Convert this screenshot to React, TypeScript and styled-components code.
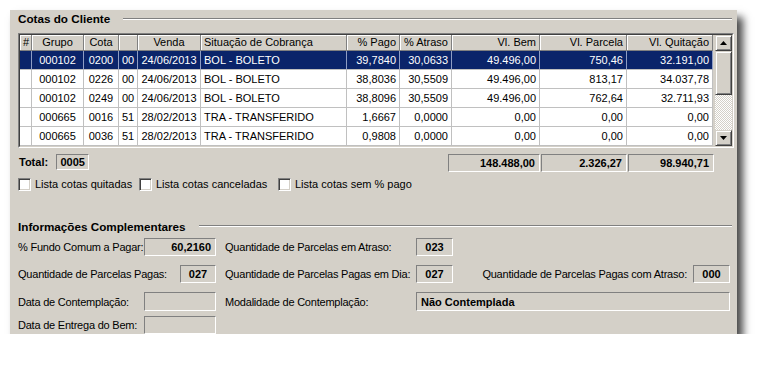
import styled, { createGlobalStyle } from "styled-components"

const GlobalStyle = createGlobalStyle`
  html, body {
    margin: 0;
    padding: 0;
    background: #fff;
  }
  body {
    font-family: "Liberation Sans", Arial, sans-serif;
    font-size: 11px;
    color: #000;
  }
`

const Page = styled.div`
  padding: 10px 0 0 10px;
`

const Panel = styled.div`
  width: 727px;
  height: 324px;
  box-sizing: border-box;
  padding: 0 5px 0 8px;
  background: #d4d0c8;
  box-shadow: 6px 7px 8px rgba(0, 0, 0, 0.72);
  overflow: hidden;
  display: flex;
  flex-direction: column;
`

const SectionHeader = styled.div<{ $top?: number }>`
  display: flex;
  align-items: center;
  gap: 13px;
  height: 20px;
  margin-top: ${(p) => p.$top ?? 0}px;
`

const SectionTitle = styled.span`
  font-weight: bold;
  font-size: 11.7px;
  white-space: nowrap;
`

const GrooveLine = styled.div`
  flex: 1;
  height: 0;
  border-top: 1px solid #808080;
  border-bottom: 1px solid #fff;
`

const GridOuter = styled.div`
  margin-top: 5px;
  width: 716px;
  box-sizing: border-box;
  border: 1px solid;
  border-color: #808080 #fff #fff #808080;
`

const GridInner = styled.div`
  display: flex;
  border: 1px solid;
  border-color: #404040 #d4d0c8 #d4d0c8 #404040;
`

const Table = styled.div`
  width: 695px;
  display: flex;
  flex-direction: column;
`

const Row = styled.div<{ $cols: string }>`
  display: grid;
  grid-template-columns: ${(p) => p.$cols};
`

const HeaderCell = styled.div<{ $align: string }>`
  height: 16px;
  box-sizing: border-box;
  padding: 0 3px;
  display: flex;
  align-items: center;
  justify-content: ${(p) => p.$align};
  background: #d4d0c8;
  border-right: 1px solid #808080;
  border-bottom: 1px solid #808080;
  box-shadow: inset 1px 1px 0 #fff;
  white-space: nowrap;
  overflow: hidden;
`

const DataCell = styled.div<{ $align: string; $selected: boolean }>`
  height: 19px;
  box-sizing: border-box;
  padding: 0 3px;
  display: flex;
  align-items: center;
  justify-content: ${(p) => p.$align};
  background: ${(p) => (p.$selected ? "#0a246a" : "#fff")};
  color: ${(p) => (p.$selected ? "#fff" : "#000")};
  border-right: 1px solid ${(p) => (p.$selected ? "#8e9dc4" : "#c0c0c0")};
  border-bottom: 1px solid #c0c0c0;
  white-space: nowrap;
  overflow: hidden;
`

const ScrollBar = styled.div`
  width: 17px;
  display: flex;
  flex-direction: column;
`

const ScrollButton = styled.div<{ $height: number }>`
  height: ${(p) => p.$height}px;
  box-sizing: border-box;
  background: #d4d0c8;
  border: 1px solid;
  border-color: #d4d0c8 #404040 #404040 #d4d0c8;
  box-shadow: inset 1px 1px 0 #fff, inset -1px -1px 0 #808080;
  display: flex;
  align-items: center;
  justify-content: center;
`

const ScrollTrack = styled.div`
  flex: 1;
  background: repeating-conic-gradient(#fff 0 25%, #d4d0c8 0 50%) 0 0 / 2px 2px;
`

const TotalsRow = styled.div`
  display: flex;
  align-items: flex-start;
  margin-top: 6px;
  height: 18px;
`

const TotalLabel = styled.span`
  font-weight: bold;
  margin: 2px 8px 0 1px;
`

const ValueBox = styled.div<{ $width?: number; $height?: number; $align?: string }>`
  ${(p) => (p.$width ? `width: ${p.$width}px;` : "flex: 1;")}
  height: ${(p) => p.$height ?? 18}px;
  box-sizing: border-box;
  border: 1px solid;
  border-color: #808080 #fff #fff #808080;
  display: flex;
  align-items: center;
  justify-content: ${(p) => p.$align ?? "flex-end"};
  padding: 0 4px;
  font-weight: bold;
  white-space: nowrap;
  flex-shrink: 0;
`

const TotalsGroup = styled.div`
  display: flex;
  gap: 1px;
  margin-left: auto;
  margin-right: 18px;
`

const CheckRow = styled.div`
  display: flex;
  margin-top: 6px;
  height: 13px;
`

const CheckItem = styled.label<{ $width: number }>`
  width: ${(p) => p.$width}px;
  display: flex;
  align-items: center;
  gap: 4px;
  white-space: nowrap;
`

const CheckBox = styled.span`
  width: 13px;
  height: 13px;
  box-sizing: border-box;
  background: #fff;
  border: 1px solid;
  border-color: #808080 #fff #fff #808080;
  box-shadow: inset 1px 1px 0 #404040, inset -1px -1px 0 #d4d0c8;
`

const InfoGrid = styled.div`
  display: grid;
  grid-template-columns: 198px 228px 268px;
  column-gap: 9px;
  margin-top: 2px;
`

const InfoCell = styled.div<{ $top: number; $justify?: string; $span?: number; $height?: number; $gap?: number }>`
  display: flex;
  align-items: center;
  justify-content: ${(p) => p.$justify ?? "space-between"};
  gap: ${(p) => p.$gap ?? 0}px;
  margin-top: ${(p) => p.$top}px;
  height: ${(p) => p.$height ?? 18}px;
  ${(p) => (p.$span ? `grid-column: span ${p.$span};` : "")}
  white-space: nowrap;
`

const InfoLabel = styled.span<{ $width?: number }>`
  letter-spacing: -0.22px;
  ${(p) => (p.$width ? `width: ${p.$width}px; flex-shrink: 0;` : "")}
`

const columns = [
  { title: "#", w: 12, align: "flex-start" },
  { title: "Grupo", w: 52, align: "center" },
  { title: "Cota", w: 35, align: "center" },
  { title: "", w: 19, align: "center" },
  { title: "Venda", w: 63, align: "center" },
  { title: "Situação de Cobrança", w: 146, align: "flex-start" },
  { title: "% Pago", w: 53, align: "flex-end" },
  { title: "% Atraso", w: 52, align: "flex-end" },
  { title: "Vl. Bem", w: 88, align: "flex-end" },
  { title: "Vl. Parcela", w: 87, align: "flex-end" },
  { title: "Vl. Quitação", w: 86, align: "flex-end" },
]

const rows = [
  ["", "000102", "0200", "00", "24/06/2013", "BOL - BOLETO", "39,7840", "30,0633", "49.496,00", "750,46", "32.191,00"],
  ["", "000102", "0226", "00", "24/06/2013", "BOL - BOLETO", "38,8036", "30,5509", "49.496,00", "813,17", "34.037,78"],
  ["", "000102", "0249", "00", "24/06/2013", "BOL - BOLETO", "38,8096", "30,5509", "49.496,00", "762,64", "32.711,93"],
  ["", "000665", "0016", "51", "28/02/2013", "TRA - TRANSFERIDO", "1,6667", "0,0000", "0,00", "0,00", "0,00"],
  ["", "000665", "0036", "51", "28/02/2013", "TRA - TRANSFERIDO", "0,9808", "0,0000", "0,00", "0,00", "0,00"],
]

const gridCols = columns.map((c) => `${c.w}px`).join(" ")

function Arrow({ down }: { down?: boolean }) {
  return (
    <svg width="7" height="4" viewBox="0 0 7 4">
      <path d={down ? "M0 0H7L3.5 4Z" : "M3.5 0L7 4H0Z"} fill="#000" />
    </svg>
  )
}

export default function App() {
  return (
    <Page>
      <GlobalStyle />
      <Panel>
        <SectionHeader>
          <SectionTitle>Cotas do Cliente</SectionTitle>
          <GrooveLine />
        </SectionHeader>

        <GridOuter>
          <GridInner>
            <Table>
              <Row $cols={gridCols}>
                {columns.map((c, i) => (
                  <HeaderCell key={i} $align={c.align}>{c.title}</HeaderCell>
                ))}
              </Row>
              {rows.map((r, ri) => (
                <Row key={ri} $cols={gridCols}>
                  {r.map((v, ci) => (
                    <DataCell key={ci} $align={columns[ci].align} $selected={ri === 0}>{v}</DataCell>
                  ))}
                </Row>
              ))}
            </Table>
            <ScrollBar>
              <ScrollButton $height={16}><Arrow /></ScrollButton>
              <ScrollButton $height={44} />
              <ScrollTrack />
              <ScrollButton $height={16}><Arrow down /></ScrollButton>
            </ScrollBar>
          </GridInner>
        </GridOuter>

        <TotalsRow>
          <TotalLabel>Total:</TotalLabel>
          <ValueBox $width={33} $height={16} $align="center">0005</ValueBox>
          <TotalsGroup>
            <ValueBox $width={92}>148.488,00</ValueBox>
            <ValueBox $width={86}>2.326,27</ValueBox>
            <ValueBox $width={86}>98.940,71</ValueBox>
          </TotalsGroup>
        </TotalsRow>

        <CheckRow>
          <CheckItem $width={121}><CheckBox />Lista cotas quitadas</CheckItem>
          <CheckItem $width={139}><CheckBox />Lista cotas canceladas</CheckItem>
          <CheckItem $width={160}><CheckBox />Lista cotas sem % pago</CheckItem>
        </CheckRow>

        <SectionHeader $top={27}>
          <SectionTitle>Informações Complementares</SectionTitle>
          <GrooveLine />
        </SectionHeader>

        <InfoGrid>
          <InfoCell $top={1}>
            <InfoLabel>% Fundo Comum a Pagar:</InfoLabel>
            <ValueBox $width={72}>60,2160</ValueBox>
          </InfoCell>
          <InfoCell $top={1}>
            <InfoLabel>Quantidade de Parcelas em Atraso:</InfoLabel>
            <ValueBox $width={37} $align="center">023</ValueBox>
          </InfoCell>
          <InfoCell $top={1} />

          <InfoCell $top={9}>
            <InfoLabel>Quantidade de Parcelas Pagas:</InfoLabel>
            <ValueBox $width={36} $align="center">027</ValueBox>
          </InfoCell>
          <InfoCell $top={9}>
            <InfoLabel>Quantidade de Parcelas Pagas em Dia:</InfoLabel>
            <ValueBox $width={37} $align="center">027</ValueBox>
          </InfoCell>
          <InfoCell $top={9} $justify="flex-end" $gap={6}>
            <InfoLabel>Quantidade de Parcelas Pagas com Atraso:</InfoLabel>
            <ValueBox $width={37} $align="center">000</ValueBox>
          </InfoCell>

          <InfoCell $top={9} $height={19}>
            <InfoLabel>Data de Contemplação:</InfoLabel>
            <ValueBox $width={72} $height={19} />
          </InfoCell>
          <InfoCell $top={9} $height={19} $span={2} $justify="flex-start">
            <InfoLabel $width={191}>Modalidade de Contemplação:</InfoLabel>
            <ValueBox $height={19} $align="flex-start">Não Contemplada</ValueBox>
          </InfoCell>

          <InfoCell $top={5}>
            <InfoLabel>Data de Entrega do Bem:</InfoLabel>
            <ValueBox $width={72} />
          </InfoCell>
        </InfoGrid>
      </Panel>
    </Page>
  )
}
